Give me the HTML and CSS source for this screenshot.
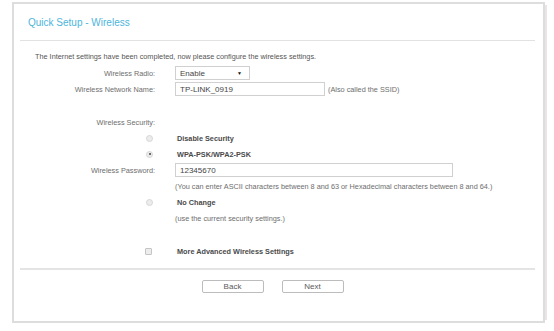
FILE: index.html
```html
<!DOCTYPE html>
<html lang="en">

<head>
    <meta charset="UTF-8">
    <title>Quick Setup - Wireless</title>
    <link rel="stylesheet" href="styles.css">
</head>

<body>
    <div class="panel">
        <div class="panel-head">
            <div class="title">Quick Setup - Wireless</div>
        </div>

        <div class="form">
            <div class="intro">The Internet settings have been completed, now please configure the wireless settings.</div>

            <div class="row">
                <span class="label">Wireless Radio:</span>
                <span class="select">Enable <span class="caret">&#9660;</span></span>
            </div>
            <div class="row">
                <span class="label">Wireless Network Name:</span>
                <span class="value">
                    <span class="input input-short">TP-LINK_0919</span>
                    <span class="note">(Also called the SSID)</span>
                </span>
            </div>

            <div class="row spacer"></div>

            <div class="row">
                <span class="label">Wireless Security:</span>
                <span></span>
            </div>
            <div class="row">
                <span class="label"><span class="radio"></span></span>
                <span class="strong">Disable Security</span>
            </div>
            <div class="row">
                <span class="label"><span class="radio checked"></span></span>
                <span class="strong">WPA-PSK/WPA2-PSK</span>
            </div>
            <div class="row">
                <span class="label">Wireless Password:</span>
                <span class="input input-long">12345670</span>
            </div>
            <div class="row">
                <span></span>
                <span class="note">(You can enter ASCII characters between 8 and 63 or Hexadecimal characters between 8 and 64.)</span>
            </div>
            <div class="row">
                <span class="label"><span class="radio"></span></span>
                <span class="strong">No Change</span>
            </div>
            <div class="row">
                <span></span>
                <span class="note">(use the current security settings.)</span>
            </div>

            <div class="row spacer"></div>

            <div class="row">
                <span class="label"><span class="checkbox"></span></span>
                <span class="strong">More Advanced Wireless Settings</span>
            </div>
        </div>

        <div class="actions">
            <div class="button">Back</div>
            <div class="button">Next</div>
        </div>
    </div>
</body>

</html>
```

FILE: styles.css
```css
body * {
    font-family: "Liberation Sans", Arial, sans-serif;
    box-sizing: border-box;
}

body {
    margin: 0;
    background-color: #ffffff;
    color: #5a5a5a;
}

.panel {
    margin: 2px 0 0 12px;
    width: 533px;
    height: 321px;
    border: 2px solid #dddddd;
    box-shadow: 5px 0 0 -3px #e6e6e6;
}

.panel-head {
    margin: 0 8px 0 6px;
    height: 37px;
    padding-left: 8px;
    display: flex;
    align-items: center;
    border-bottom: 1px solid #e2e2e2;
}

.title {
    font-size: 10px;
    color: #4db5dc;
    padding-top: 1px;
}

.form {
    padding-top: 8px;
    font-size: 7.3px;
}

.intro {
    height: 16px;
    line-height: 16px;
    padding-left: 21px;
    color: #555555;
}

.row {
    display: grid;
    grid-template-columns: 141px 1fr;
    column-gap: 20px;
    height: 16px;
    align-items: center;
}

.spacer {
    height: 17px;
}

.label {
    display: flex;
    justify-content: flex-end;
    align-items: center;
    color: #6e6e6e;
}

.value {
    display: flex;
    align-items: center;
    gap: 3px;
}

.note {
    color: #6e6e6e;
}

.strong {
    font-weight: 700;
    color: #4a4a4a;
    padding-left: 2px;
}

.select,
.input {
    display: flex;
    align-items: center;
    height: 14px;
    padding: 0 4px;
    border: 1px solid #d0d0d0;
    font-size: 8px;
    color: #444444;
    background: #ffffff;
}

.select {
    width: 75px;
    justify-content: space-between;
}

.caret {
    font-size: 5px;
    color: #111111;
    padding-right: 3px;
}

.input-short {
    width: 150px;
}

.input-long {
    width: 278px;
}

.radio {
    width: 7px;
    height: 7px;
    margin-right: 2px;
    border-radius: 50%;
    border: 1px solid #d6d6d6;
    background: #ececec;
    position: relative;
}

.radio.checked::after {
    content: "";
    position: absolute;
    left: 1.5px;
    top: 1.5px;
    width: 2px;
    height: 2px;
    border-radius: 50%;
    background: #444444;
}

.checkbox {
    width: 7px;
    height: 7px;
    margin-right: 3px;
    border: 1px solid #c4c4c4;
    border-radius: 1px;
    background: #ededed;
}

.actions {
    margin: 9px 8px 0 6px;
    padding-top: 10px;
    padding-right: 10px;
    border-top: 2px solid #e4e4e4;
    display: flex;
    justify-content: center;
    gap: 18px;
}

.button {
    width: 62px;
    height: 13px;
    border: 1px solid #bcbcbc;
    border-radius: 2px;
    font-size: 8px;
    color: #5a5a5a;
    display: flex;
    align-items: center;
    justify-content: center;
}
```
